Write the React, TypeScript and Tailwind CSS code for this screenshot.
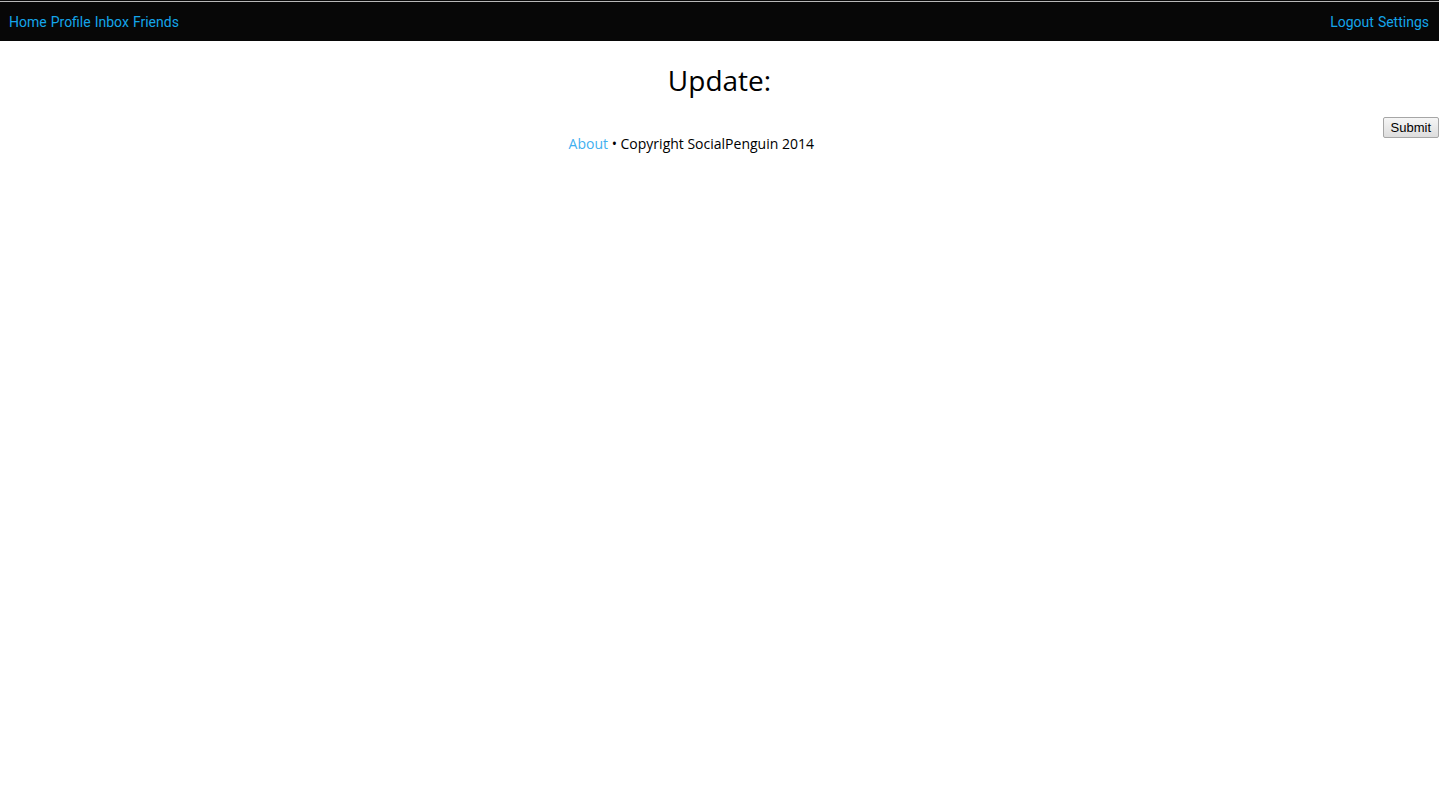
import React from "react";

const App: React.FC = () => {
  return (
    <div className="min-h-screen bg-white">
      {/* Top nav */}
      <div className="h-[41px] bg-[#070707] border-t border-[#0a0a0a] flex flex-col">
        <div className="h-px bg-[#b8b8b8]" />
        <div className="flex justify-between items-center pl-[9px] pr-[10px] flex-1 pt-[2px] font-['Roboto',sans-serif] text-[14px] text-[#14a5ea]">
          <div className="flex gap-[4px]">
            <a href="#">Home</a>
            <a href="#">Profile</a>
            <a href="#">Inbox</a>
            <a href="#">Friends</a>
          </div>
          <div className="flex gap-[4px]">
            <a href="#">Logout</a>
            <a href="#">Settings</a>
          </div>
        </div>
      </div>

      {/* Main */}
      <div className="font-['Open_Sans',sans-serif]">
        <h1 className="text-center text-[28px] text-black mt-[20px] leading-[38px]">Update:</h1>
        <div className="mt-[18px]">
          <button className="float-right font-['Liberation_Sans',Arial,sans-serif] text-[13px] text-black px-[7px] h-[21px] leading-[19px] border border-[#a6a6a6] rounded-[2px] bg-gradient-to-b from-[#f6f6f6] to-[#dddddd]">
            Submit
          </button>
          <p className="text-center text-[14px] text-black pt-[17px] leading-[20px]">
            <a href="#" className="text-[#3fb0f0]">About</a> • Copyright SocialPenguin 2014
          </p>
        </div>
      </div>
    </div>
  );
};

export default App;
